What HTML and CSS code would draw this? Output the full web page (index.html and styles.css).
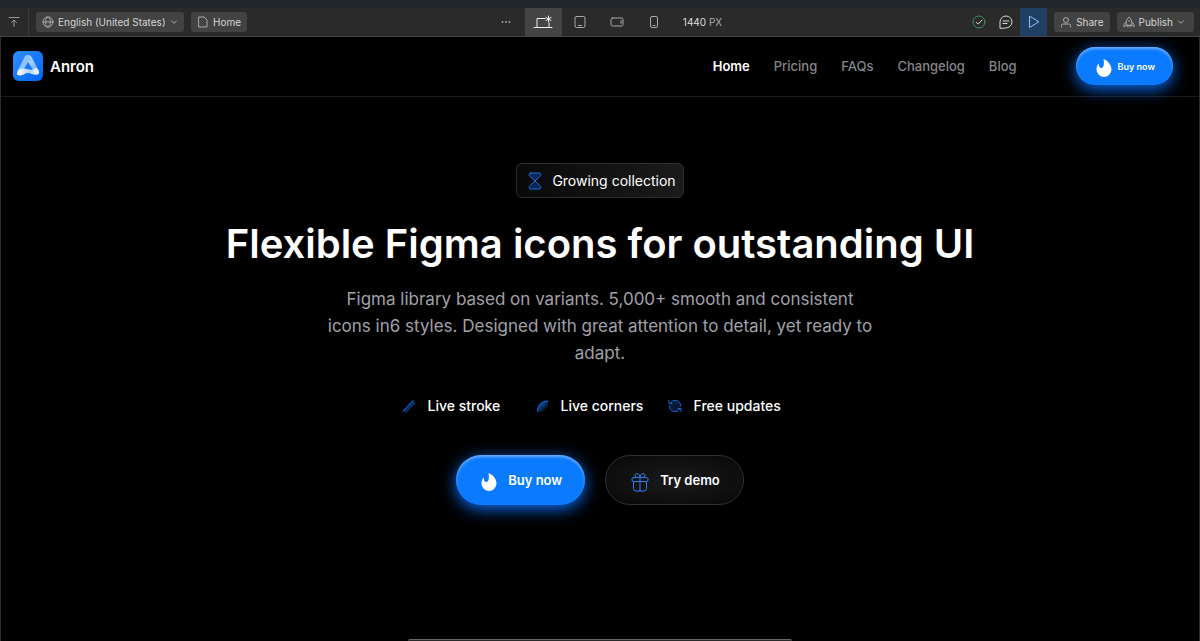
FILE: index.html
```html
<!DOCTYPE html>
<html lang="en">

<head>
    <meta charset="UTF-8">
    <meta name="viewport" content="width=device-width, initial-scale=1.0">
    <title>Anron</title>
    <link rel="stylesheet" href="styles.css">
</head>

<body>
    <!-- editor toolbar -->
    <div class="toolbar">
        <div class="tools">
            <button class="collapse" aria-label="Collapse toolbar">
                <svg width="12" height="12" viewBox="0 0 12 12"><path d="M1 1.500h10M6 10.500V4.500M3.500 6.500L6 4l2.500 2.500" /></svg>
            </button>
            <label class="chip language">
                <svg width="12" height="12" viewBox="0 0 12 12"><circle cx="6" cy="6" r="5" /><ellipse cx="6" cy="6" rx="2.300" ry="5" /><path d="M1 6h10" /></svg>
                <select aria-label="Language">
                    <option>English (United States)</option>
                </select>
                <svg width="8" height="8" viewBox="0 0 8 8"><path d="M1.500 2.800L4 5.300l2.500-2.500" /></svg>
            </label>
            <button class="chip">
                <svg width="12" height="12" viewBox="0 0 12 12"><path d="M2 1h5l3 3v7H2z" /></svg>
                Home
            </button>
        </div>
        <div class="devices">
            <button aria-label="More breakpoints">
                <svg class="dots" width="12" height="4" viewBox="0 0 12 4"><circle cx="2.500" cy="2" r="0.900" /><circle cx="6" cy="2" r="0.900" /><circle cx="9.500" cy="2" r="0.900" /></svg>
            </button>
            <button class="selected" aria-label="Desktop">
                <svg width="20" height="16" viewBox="0 0 20 16"><path d="M1 13.500h18M4 13.500V4.500h8M16 9v4.500M15.500 2v6M12.900 3.500l5.200 3M18.100 3.500l-5.200 3" /></svg>
            </button>
            <button aria-label="Tablet">
                <svg width="12" height="14" viewBox="0 0 12 14"><rect x="1" y="1.500" width="10" height="11" rx="1.500" /><path d="M4.500 10.500h3" /></svg>
            </button>
            <button aria-label="Mobile landscape">
                <svg width="14" height="10" viewBox="0 0 14 10"><rect x="1" y="1" width="12" height="8" rx="1.500" /><path d="M11 3.700v2.600" /></svg>
            </button>
            <button aria-label="Mobile portrait">
                <svg width="10" height="14" viewBox="0 0 10 14"><rect x="1.500" y="1.500" width="7" height="11" rx="1.500" /><path d="M4 10.500h2" /></svg>
            </button>
            <span class="size">1440 <span>PX</span></span>
        </div>
        <div class="actions">
            <button class="check" aria-label="Saved">
                <svg width="14" height="14" viewBox="0 0 14 14"><circle cx="7" cy="7" r="6" /><path d="M4.200 7.200l2 1.900 3.700-3.900" /></svg>
            </button>
            <button aria-label="Comments">
                <svg width="14" height="14" viewBox="0 0 14 14"><path d="M1 13V7a6 6 0 1 1 6 6zM4 6h6M4 8.500h4" /></svg>
            </button>
            <button class="preview" aria-label="Preview">
                <svg width="12" height="14" viewBox="0 0 12 14"><path d="M1.500 1.500v11L10.500 7z" /></svg>
            </button>
            <button class="chip">
                <svg width="12" height="12" viewBox="0 0 12 12"><circle cx="6" cy="4" r="2.500" /><path d="M1.500 11V9.500Q1.500 8 3 8h6q1.500 0 1.500 1.500V11" /></svg>
                Share
            </button>
            <button class="chip publish">
                <svg width="12" height="12" viewBox="0 0 12 12"><path d="M3.200 9C2.700 5.500 4 2.500 6 1c2 1.500 3.300 4.500 2.800 8zM3 6L1 8.500V11l2.200-2M9 6l2 2.500V11L8.800 9M4.800 9v2M7.200 9v2M6 4.500v1" /></svg>
                Publish
                <svg width="8" height="8" viewBox="0 0 8 8"><path d="M1.500 2.800L4 5.300l2.500-2.500" /></svg>
            </button>
        </div>
    </div>

    <div class="page">
        <header class="navbar">
            <a class="brand" href="#">
                <svg width="30" height="30" viewBox="0 0 30 30">
                    <defs>
                        <linearGradient id="tile" x1="0" y1="0" x2="1" y2="1">
                            <stop offset="0" stop-color="#2f8fff" />
                            <stop offset="1" stop-color="#0065f5" />
                        </linearGradient>
                        <linearGradient id="leg" x1="0" y1="0" x2="1" y2="1">
                            <stop offset="0" stop-color="#e4f1ff" />
                            <stop offset="1" stop-color="#4d9dff" />
                        </linearGradient>
                        <linearGradient id="fold" x1="0" y1="0" x2="1" y2="0">
                            <stop offset="0" stop-color="#ffffff" />
                            <stop offset="0.550" stop-color="#b4d6ff" />
                            <stop offset="1" stop-color="#f2f8ff" />
                        </linearGradient>
                    </defs>
                    <rect width="30" height="30" rx="6" fill="url(#tile)" />
                    <path d="M11.500 6Q15 2 18.500 6L25.500 19Q27 22 25 23.500L20 19 15.500 11.500Q14 9 11.500 6z" fill="url(#leg)" />
                    <path d="M11.500 6Q14.500 2.500 17.500 6.500L18.500 9.500Q16 9 14.500 12L11 18Q6 19 4.200 20.500z" fill="#8dc1ff" />
                    <path d="M4.200 21Q6 17.500 10.500 17.500C15 17.500 16 19.500 20 18.500L22 17Q24 16.500 25 18.500Q27.500 22.500 24.500 23.500C20.500 25 17 20.500 12.500 22.500Q9.500 24.500 7 24.500Q3.200 24.500 4.200 21z" fill="url(#fold)" />
                </svg>
                Anron
            </a>
            <nav>
                <a class="active" href="#">Home</a>
                <a href="#">Pricing</a>
                <a href="#">FAQs</a>
                <a href="#">Changelog</a>
                <a href="#">Blog</a>
            </nav>
            <a class="btn btn-primary btn-small" href="#">
                <svg width="16" height="20" viewBox="0 0 16 20"><path d="M7.500 1C11.500 2.500 15.500 6.500 15.500 11.500a7.500 7.500 0 0 1-15 0C.5 9 1.200 7.200 2.800 5.500c0 2.800.7 4.500 2.400 4.500C8 10 8.300 5.500 7.500 1z" /></svg>
                Buy now
            </a>
        </header>

        <main class="hero">
            <div class="badge">
                <svg width="14" height="18" viewBox="0 0 14 18"><path d="M3 1h8c2 0 2.500 2 1.200 3.200L1.800 13.800C.5 15 1 17 3 17h8c2 0 2.500-2 1.200-3.200L1.800 4.200C.5 3 1 1 3 1z" /></svg>
                Growing collection
            </div>
            <h1>Flexible Figma icons for outstanding UI</h1>
            <p>Figma library based on variants. 5,000+ smooth and consistent icons in6 styles. Designed with great attention to detail, yet ready to adapt.</p>
            <ul class="features">
                <li>
                    <svg width="16" height="16" viewBox="0 0 16 16">
                        <defs>
                            <linearGradient id="fade" x1="0" y1="0" x2="1" y2="1">
                                <stop offset="0.200" stop-color="#0a55b5" />
                                <stop offset="0.900" stop-color="#0a55b5" stop-opacity="0" />
                            </linearGradient>
                        </defs>
                        <path class="shade" d="M2 13L12 2.500l3 3L5 15z" />
                        <path d="M2 13L12 2.500" />
                    </svg>
                    Live stroke
                </li>
                <li>
                    <svg width="16" height="16" viewBox="0 0 16 16">
                        <path class="shade" d="M3.500 13.500C3.500 7 7.500 3 14 3v5L9 13.500z" />
                        <path d="M3.500 13.500C3.500 7 7.500 3 14 3" />
                    </svg>
                    Live corners
                </li>
                <li>
                    <svg width="16" height="16" viewBox="0 0 16 16">
                        <circle class="disc" cx="8" cy="8" r="5.500" />
                        <path d="M3 5.300A5.700 5.700 0 0 1 13.700 8M13 10.700A5.700 5.700 0 0 1 2.300 8M2 2.500v3h3M14 13.500v-3h-3" />
                    </svg>
                    Free updates
                </li>
            </ul>
            <div class="buttons">
                <a class="btn btn-primary" href="#">
                    <svg width="16" height="20" viewBox="0 0 16 20"><path d="M7.500 1C11.500 2.500 15.500 6.500 15.500 11.500a7.500 7.500 0 0 1-15 0C.5 9 1.200 7.200 2.800 5.500c0 2.800.7 4.500 2.400 4.500C8 10 8.300 5.500 7.500 1z" /></svg>
                    Buy now
                </a>
                <a class="btn btn-dark" href="#">
                    <svg width="18" height="20" viewBox="0 0 18 20"><rect x="1" y="5.500" width="16" height="4" rx="1.500" /><path d="M2.500 9.500v7q0 2.500 2.500 2.500h8q2.500 0 2.500-2.500v-7M9 5.500V19M9 5.500H6C3.500 5.500 3.300 1.500 5.800 1.500 8 1.500 9 4 9 5.500zM9 5.500h3c2.500 0 2.700-4 .2-4C10 1.500 9 4 9 5.500z" /></svg>
                    Try demo
                </a>
            </div>
        </main>
    </div>
    <div class="dock"></div>
</body>

</html>
```

FILE: styles.css
```css
* {
    box-sizing: border-box;
}

body {
    margin: 0;
    min-height: 100vh;
    display: flex;
    flex-direction: column;
    background-color: #000;
    color: white;
    font-family: Inter, sans-serif;
}

button,
select {
    font-family: inherit;
    font-size: inherit;
    color: inherit;
    background: none;
    border: none;
    padding: 0;
    cursor: pointer;
}

a {
    color: inherit;
    text-decoration: none;
}

svg {
    fill: none;
    stroke: currentColor;
    stroke-linecap: round;
    stroke-linejoin: round;
    flex-shrink: 0;
}

/* toolbar */
.toolbar {
    display: grid;
    grid-template-columns: 1fr auto 1fr;
    height: 37px;
    border-top: 8px solid #20262c;
    border-bottom: 1px solid #444;
    background-color: #2a2a2a;
    color: #d5d5d5;
    font-size: 10px;
}

.tools,
.devices,
.actions {
    display: flex;
    align-items: center;
}

.tools {
    gap: 7px;
}

.actions {
    justify-content: flex-end;
    gap: 7px;
    padding-right: 6px;
}

.collapse {
    width: 29px;
    align-self: stretch;
    border-right: 1px solid #3c3c3c;
    color: #999;
}

.toolbar button {
    display: flex;
    align-items: center;
    justify-content: center;
}

.toolbar .chip {
    display: flex;
    align-items: center;
    gap: 4px;
    height: 20px;
    padding: 0 6px;
    border-radius: 3px;
    background-color: #424242;
}

.chip svg {
    color: #aaa;
}

.chip select {
    appearance: none;
}

.toolbar .publish {
    padding-right: 9px;
}

.devices {
    padding-left: 10px;
    color: #aaa;
}

.devices button {
    width: 37px;
    align-self: stretch;
}

.devices .selected {
    background-color: #444;
    color: #eee;
}

.dots {
    fill: currentColor;
    stroke: none;
}

.size {
    padding-left: 10px;
    color: #ddd;
}

.size span {
    color: #aaa;
}

.actions .check {
    margin-right: 6px;
}

.check circle {
    stroke: #3f8f62;
}

.actions .preview {
    width: 27px;
    align-self: stretch;
    background-color: #1f3f63;
    color: #8fc3ff;
}

/* site */
.page {
    flex: 1;
    border: solid #2c2c2c;
    border-width: 0 1px;
}

.navbar {
    display: flex;
    align-items: center;
    height: 60px;
    padding: 0 26px 1px 12px;
    border-bottom: 1px solid #1a1a1a;
}

.brand {
    display: flex;
    align-items: center;
    gap: 7px;
    margin-right: auto;
    font-size: 15px;
    font-weight: 600;
}

.brand svg {
    stroke: none;
}

nav {
    display: flex;
    gap: 24px;
    margin-right: 59px;
    font-size: 13px;
    font-weight: 500;
    color: #85858b;
}

nav .active {
    color: white;
    font-weight: 600;
}

.hero {
    display: flex;
    flex-direction: column;
    align-items: center;
    padding: 66px 20px;
    text-align: center;
}

.badge {
    display: flex;
    align-items: center;
    gap: 10px;
    height: 35px;
    padding: 0 7px 0 11px;
    border: 1px solid #2d2d2d;
    border-radius: 6px;
    background: linear-gradient(90deg, #090909, #1b1b1b);
    font-size: 14px;
}

.badge svg {
    color: #1a6fe8;
    fill: #082450;
}

h1 {
    margin: 19px 0 0;
    font-size: 40px;
    font-weight: 600;
    line-height: 54px;
}

.hero p {
    max-width: 552px;
    margin: 15px 0 0;
    color: #a1a1aa;
    font-size: 17px;
    line-height: 27px;
}

.features {
    display: grid;
    grid-template-columns: repeat(3, 133px);
    margin: 28px 0 0;
    padding: 0;
    list-style: none;
    font-size: 14px;
    font-weight: 500;
    line-height: 22px;
}

.features li {
    display: flex;
    align-items: center;
    gap: 11px;
}

.features svg {
    color: #1768d8;
}

.features .shade {
    fill: url(#fade);
    stroke: none;
}

.features .disc {
    fill: #071a38;
    stroke: none;
}

.buttons {
    display: flex;
    gap: 20px;
    margin-top: 38px;
}

.btn {
    display: flex;
    align-items: center;
    gap: 11px;
    height: 50px;
    padding: 0 23px 0 25px;
    border-radius: 25px;
    font-size: 13px;
    font-weight: 600;
}

.btn svg {
    margin-top: 4px;
}

.btn-primary {
    background-color: #0a7aff;
    box-shadow: 0 4px 16px #0a6cf0, inset 0 2px 3px rgba(255, 255, 255, 0.4);
}

.btn-primary svg {
    fill: white;
    stroke: none;
}

.btn-small {
    height: 38px;
    gap: 6px;
    padding: 0 18px 0 20px;
    font-size: 9px;
}

.btn-dark {
    border: 1px solid #303030;
    background: radial-gradient(#1a1a1a, #080808);
}

.btn-dark svg {
    color: #2680f5;
}

/* top edge of the floating dock */
.dock {
    position: fixed;
    bottom: 0;
    left: 34%;
    right: 34%;
    height: 2px;
    border-top: 1px solid #666;
    border-radius: 8px 8px 0 0;
    background-color: #2a2a2a;
}
```
